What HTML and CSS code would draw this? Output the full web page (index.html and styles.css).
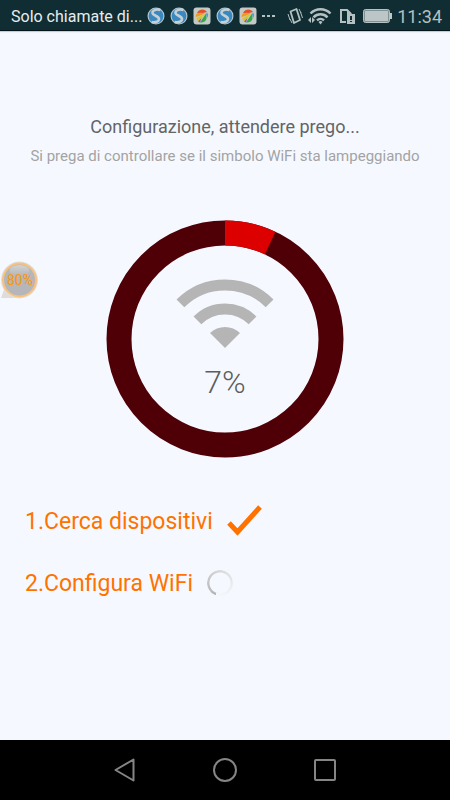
FILE: index.html
```html
<!DOCTYPE html>
<html lang="it">
<head>
<meta charset="utf-8">
<meta name="viewport" content="width=device-width, initial-scale=1">
<title>Configurazione WiFi</title>
<link rel="stylesheet" href="styles.css">
</head>
<body>
<svg class="defs" aria-hidden="true">
  <defs>
    <symbol id="swirl" viewBox="0 0 18 18">
      <circle cx="9" cy="9" r="8.500" fill="#b9c6cb"/>
      <circle cx="9" cy="9" r="7.400" fill="#3a88c0"/>
      <path d="M13.500 3C8 1.500 4 4.500 6 7c1.500 1.800 6 2.500 6 5 0 2.500-3.500 3.900-7.500 3" fill="none" stroke="#c3d0d5" stroke-width="2.600"/>
    </symbol>
    <symbol id="gallery" viewBox="0 0 18 18">
      <rect x=".5" y=".5" width="17" height="17" rx="3" fill="#c6cac7"/>
      <path d="M4 6C6 1.500 12 1.500 14 5L8 6.500z" fill="#e0512f"/>
      <path d="M2.500 10C2.500 6 6 5 12 6.500L6 9z" fill="#f09a1e"/>
      <path d="M13 6L3.500 11c0 1.500.5 2.500 1.500 3.500z" fill="#d8c62c"/>
      <path d="M13 6.500L7 15.500c3 .5 6-1 6.500-4z" fill="#36a84a"/>
      <path d="M14 5.500c1.500 1.500 1.500 3.500 0 5.500l-1-4z" fill="#4e9dd0"/>
      <path d="M8.500 11L5 14.500l2 1z" fill="#9650bd"/>
    </symbol>
  </defs>
</svg>
<div class="screen">
  <header class="status">
    <span class="carrier">Solo chiamate di...</span>
    <div class="notices">
      <svg class="app" aria-hidden="true"><use href="#swirl"/></svg>
      <svg class="app" aria-hidden="true"><use href="#swirl"/></svg>
      <svg class="app" aria-hidden="true"><use href="#gallery"/></svg>
      <svg class="app" aria-hidden="true"><use href="#swirl"/></svg>
      <svg class="app" aria-hidden="true"><use href="#gallery"/></svg>
    </div>
    <svg class="more" viewBox="0 0 14 4" aria-hidden="true"><path d="M0 1h3v2H0zM5 1h3v2H5zM10 1h3v2h-3z" fill="#b5c0c0"/></svg>
    <div class="system">
      <svg width="16" height="18" viewBox="0 0 16 18" fill="none" stroke="#b5c0c0" aria-hidden="true"><path d="M3.500 4.500l6-2.500 3.500 11-6 3z" stroke-width="1.800" stroke-linejoin="round"/><path d="M1 7l2 6M3 12l2 4M12 2l2 4M13.500 5l2 6" stroke-width="1"/></svg>
      <svg width="24" height="18" viewBox="0 0 24 18" fill="none" stroke="#b5c0c0" aria-hidden="true"><path d="M2.500 6.500a14 14 0 0 1 20 0M5.500 10.300a9.800 9.800 0 0 1 14 0M9 13.400a5 5 0 0 1 7 0" stroke-width="2.500"/><path d="M10.500 15a3 3 0 0 1 4 0l-2 2.500zM0 13l3-3v6zM7 13l-3-3v6z" fill="#b5c0c0" stroke="none"/></svg>
      <svg class="sim" width="17" height="17" viewBox="0 0 17 17" aria-hidden="true"><path d="M7 14H2V2h6l4 4" fill="none" stroke="#b5c0c0" stroke-width="2"/><path d="M8 1l5 5H8z" fill="#b5c0c0"/><path d="M8 6h8v10H8z" fill="#b5c0c0"/><path d="M11 8h2v4h-2zM11 13h2v1h-2z" fill="#0f2d33"/></svg>
      <svg class="battery" width="30" height="16" viewBox="0 0 30 16" aria-hidden="true"><rect x=".5" y="1.500" width="26" height="13" rx="2" fill="#829192" stroke="#b5c0c0"/><path d="M2 3h23v10H2zM27 5h2v6h-2z" fill="#bcc6c6"/></svg>
      <time>11:34</time>
    </div>
  </header>
  <main class="content">
    <h1>Configurazione, attendere prego...</h1>
    <p class="hint">Si prega di controllare se il simbolo WiFi sta lampeggiando</p>
    <div class="progress">
      <svg class="ring" viewBox="0 0 238 238" fill="none" stroke-width="25" aria-hidden="true">
        <circle cx="119" cy="119" r="106" stroke="#4f0007"/>
        <circle cx="119" cy="119" r="106" stroke="#dc0000" pathLength="100" stroke-dasharray="7 93" transform="rotate(-90 119 119)"/>
      </svg>
      <div class="reading">
        <svg width="98" height="70" viewBox="0 0 98 70" aria-hidden="true">
          <path d="M4.400 24.400a63 63 0 0 1 89.200 0M21.400 41.400a39 39 0 0 1 55.200 0" fill="none" stroke="#b5b5b5" stroke-width="11"/>
          <path d="M49 69L34 54a21.500 21.500 0 0 1 30 0z" fill="#b5b5b5"/>
        </svg>
        <span class="percent">7%</span>
      </div>
    </div>
    <ol class="steps">
      <li>1.Cerca dispositivi
        <svg class="check" width="36" height="34" viewBox="0 0 36 34" aria-hidden="true"><path d="M2 19l8.500 9L33 3" fill="none" stroke="#ff7200" stroke-width="5"/></svg>
      </li>
      <li>2.Configura WiFi <span class="spinner"></span></li>
    </ol>
    <div class="bubble">
      <svg width="40" height="40" viewBox="0 0 40 40" aria-hidden="true">
        <defs><linearGradient id="shine" x2="0" y2="1"><stop stop-color="#d0d2d4"/><stop offset="1" stop-color="#b4b6b9"/></linearGradient></defs>
        <path d="M1 38l4-11 12 11z" fill="#dfdcda"/>
        <circle cx="19.500" cy="20" r="18.500" fill="#dfdedf"/>
        <circle cx="19.500" cy="20" r="16.500" fill="#b4b6b9" stroke="#f9c27c" stroke-width="2"/>
        <ellipse cx="19.500" cy="10.500" rx="10" ry="5.500" fill="url(#shine)"/>
      </svg>
      <span>80%</span>
    </div>
  </main>
  <nav class="navbar">
    <button type="button" aria-label="Indietro"><svg viewBox="0 0 26 26"><path d="M21.500 2.500v21L3.500 13z"/></svg></button>
    <button type="button" aria-label="Home"><svg viewBox="0 0 26 26"><circle cx="13" cy="13" r="11"/></svg></button>
    <button type="button" aria-label="Recenti"><svg viewBox="0 0 26 26"><rect x="3" y="3" width="20" height="20" rx="1"/></svg></button>
  </nav>
</div>
</body>
</html>
```
FILE: styles.css
```css
* { box-sizing: border-box; }
body {
  margin: 0;
  font-family: Roboto, "Liberation Sans", sans-serif;
  background: #f5f9ff;
}
svg { display: block; flex: none; }
.defs { position: absolute; width: 0; height: 0; }
.screen {
  display: flex;
  flex-direction: column;
  min-height: 100vh;
}
.status {
  display: flex;
  align-items: center;
  height: 31px;
  padding: 2px 8px 0 11px;
  background: #0f2d33;
  border-bottom: 1px solid #03151b;
  box-shadow: 0 1px 1px #c8ccd2;
  white-space: nowrap;
}
.carrier { font-size: 16px; color: #e8eced; }
.notices { display: flex; gap: 5px; margin-left: 5px; }
.app { width: 18px; height: 18px; }
.more { width: 14px; height: 4px; margin-left: 5px; }
.system {
  display: flex;
  align-items: center;
  margin-left: auto;
  color: #b5c0c0;
}
.system time { font-size: 18px; }
.system svg { margin-right: 5px; }
.system .sim { margin-left: 2px; margin-right: 7px; }
.system .battery { margin-right: 4px; }
.content {
  position: relative;
  flex: 1;
  padding: 84px 25px 0;
}
h1 {
  margin: 0;
  font-size: 18px;
  line-height: 24px;
  font-weight: 400;
  text-align: center;
  color: #636466;
}
.hint {
  margin: 7px 0 0;
  font-size: 15px;
  line-height: 20px;
  text-align: center;
  white-space: nowrap;
  color: #a3a3a3;
}
.progress { display: grid; justify-items: center; margin-top: 54px; }
.ring, .reading { grid-area: 1 / 1; }
.ring { width: 238px; height: 238px; }
.reading {
  display: flex;
  flex-direction: column;
  align-items: center;
  padding-top: 59px;
}
.percent {
  margin-top: 14px;
  font-size: 32px;
  line-height: 38px;
  font-weight: 300;
  color: #5c5d5f;
}
.steps {
  margin: 32px 0 0;
  padding: 0;
  list-style: none;
  color: #ff7200;
  font-size: 23px;
}
.steps li { display: flex; align-items: center; gap: 14px; height: 62px; }
.spinner {
  width: 26px;
  height: 26px;
  border-radius: 50%;
  background: conic-gradient(from 200deg, #b4b4b4, #d8d8d8 45%, #eceef2 75%, #f5f9ff);
  mask: radial-gradient(circle, transparent 10px, #000 11px);
}
.bubble { position: absolute; left: 0; top: 229px; width: 40px; height: 40px; }
.bubble span {
  position: absolute;
  inset: 0;
  font-size: 14px;
  line-height: 40px;
  text-align: center;
  color: #ff9510;
}
.navbar {
  display: flex;
  justify-content: center;
  gap: 50px;
  height: 60px;
  background: #000;
}
.navbar button {
  display: grid;
  place-items: center;
  width: 50px;
  padding: 0;
  border: 0;
  background: none;
}
.navbar svg {
  width: 26px;
  height: 26px;
  fill: none;
  stroke: #858585;
  stroke-width: 2;
  stroke-linejoin: round;
}
```
